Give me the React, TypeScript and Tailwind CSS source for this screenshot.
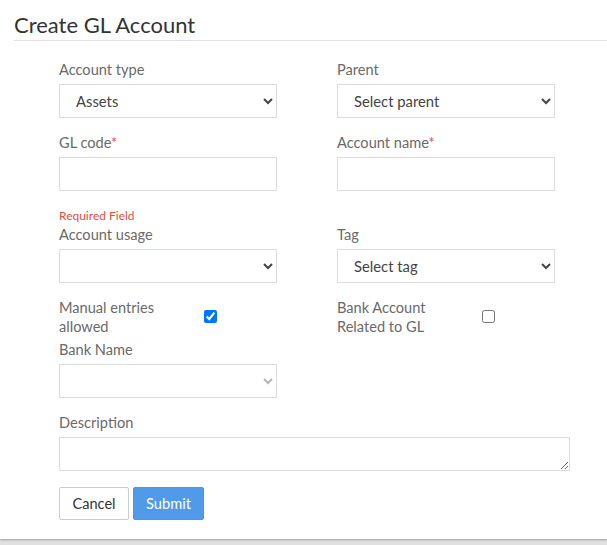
import React from "react";

const font = { fontFamily: "Lato, 'Open Sans', sans-serif" };

function Label({ children, req }: { children: React.ReactNode; req?: boolean }) {
  return (
    <div className="text-[14.6px] leading-[20px] text-[#6a6a6a] mb-[4px]">
      {children}
      {req && <span className="text-[#e74c3c]">*</span>}
    </div>
  );
}

function Select({ value, disabled }: { value?: string; disabled?: boolean }) {
  return (
    <select
      disabled={disabled}
      defaultValue={value ?? ""}
      className={
        "block w-[218px] h-[34px] border border-[#dcdcdc] bg-white px-3 text-[14.8px] leading-[20px] outline-none " +
        (disabled ? "text-[#b5b5b5]" : "text-[#444]")
      }
    >
      <option value={value ?? ""}>{value ?? ""}</option>
    </select>
  );
}

function Input() {
  return <input type="text" className="block w-[218px] h-[34px] border border-[#dcdcdc] bg-white px-3 text-[14px] outline-none" />;
}

export default function App() {
  return (
    <div className="min-h-screen bg-[#e0e0e0]" style={font}>
      <div className="bg-white h-[539px] shadow-[0_1px_2px_rgba(0,0,0,0.3)]">
        <div className="ml-[14px] h-[41px] border-b border-[#e3e3e3]">
          <h1 className="pt-[11px] text-[22px] leading-[28px] text-[#333]">Create GL Account</h1>
        </div>
        <div className="pl-[59px] pt-[19px]">
          <div className="grid grid-cols-[218px_218px] gap-x-[60px] mb-[15px]">
            <div>
              <Label>Account type</Label>
              <Select value="Assets" />
            </div>
            <div>
              <Label>Parent</Label>
              <Select value="Select parent" />
            </div>
          </div>
          <div className="grid grid-cols-[218px_218px] gap-x-[60px] mb-[1px]">
            <div>
              <Label req>GL code</Label>
              <Input />
              <div className="mt-[17px] text-[12px] leading-[16px] text-[#e74c3c]">Required Field</div>
            </div>
            <div>
              <Label req>Account name</Label>
              <Input />
            </div>
          </div>
          <div className="grid grid-cols-[218px_218px] gap-x-[60px] mb-[15px]">
            <div>
              <Label>Account usage</Label>
              <Select />
            </div>
            <div>
              <Label>Tag</Label>
              <Select value="Select tag" />
            </div>
          </div>
          <div className="grid grid-cols-[218px_218px] gap-x-[60px] mb-[4px]">
            <div className="flex items-center">
              <div className="w-[145px] text-[14.6px] leading-[19px] text-[#6a6a6a]">
                Manual entries
                <br />
                allowed
              </div>
              <input type="checkbox" defaultChecked className="w-[13px] h-[13px] m-0 -mt-[2px]" />
            </div>
            <div className="flex items-center">
              <div className="w-[145px] text-[14.6px] leading-[19px] text-[#6a6a6a]">
                Bank Account
                <br />
                Related to GL
              </div>
              <input type="checkbox" className="w-[13px] h-[13px] m-0 -mt-[2px]" />
            </div>
          </div>
          <div className="mb-[15px]">
            <Label>Bank Name</Label>
            <Select disabled />
          </div>
          <div className="mb-[16px]">
            <Label>Description</Label>
            <textarea className="block w-[511px] h-[34px] border border-[#dcdcdc] bg-white px-3 text-[14px] outline-none" />
          </div>
          <div className="flex gap-[4px]">
            <button className="w-[70px] h-[33px] border border-[#cccccc] rounded-[2px] bg-white text-[14.6px] text-[#333]">
              Cancel
            </button>
            <button className="w-[71px] h-[33px] border border-[#4a96e6] rounded-[2px] bg-[#4f9bea] text-[14.6px] text-white">
              Submit
            </button>
          </div>
        </div>
      </div>
    </div>
  );
}
